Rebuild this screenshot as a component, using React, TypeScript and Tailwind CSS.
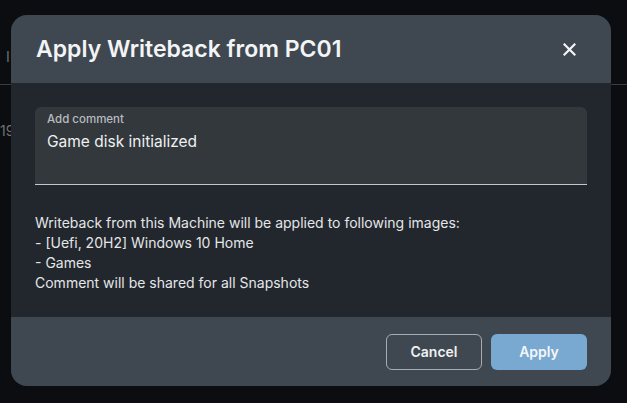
import React from "react";

export default function App() {
  return (
    <div
      className="relative w-[627px] h-[403px] overflow-hidden bg-[#0b0d10]"
      style={{ fontFamily: "Inter, 'Noto Sans', sans-serif" }}
    >
      {/* faint background page */}
      <div className="absolute left-[6px] top-[46px] text-[14px] text-[#6b7074]">I</div>
      <div className="absolute left-0 top-[84px] w-full h-px bg-[#3a3d40]" />
      <div className="absolute left-0 top-[120px] text-[14px] text-[#6b7074]">19</div>

      {/* dialog */}
      <div className="absolute left-[11px] top-[15px] w-[600px] h-[371px] rounded-[16px] overflow-hidden flex flex-col bg-[#22262d]">
        <div className="h-[68px] bg-[#3f4850] flex items-center justify-between pl-[25px] pr-[35px]">
          <h1 className="text-[23px] font-semibold text-[#f3f4f5] tracking-[0px]">
            Apply Writeback from PC01
          </h1>
          <svg width="13" height="13" viewBox="0 0 13 13" className="mt-px">
            <path d="M1.5 1.5 L11.5 11.5 M11.5 1.5 L1.5 11.5" stroke="#f3f4f5" strokeWidth="2.2" strokeLinecap="square" />
          </svg>
        </div>
        <div className="flex-1 px-[24px] pt-[24px]">
          <div className="h-[78px] bg-[#32383c] rounded-t-[6px] border-b border-[#c4c6c8] px-[12px] pt-[5px]">
            <div className="text-[11.5px] font-medium text-[#b8bcc0] leading-[14px]">Add comment</div>
            <div className="text-[15.5px] text-[#eef0f1] leading-[20px] mt-[6px]">Game disk initialized</div>
          </div>
          <div className="mt-[28px] text-[14px] leading-[20px] text-[#e4e6e8]">
            <div>Writeback from this Machine will be applied to following images:</div>
            <div>- [Uefi, 20H2] Windows 10 Home</div>
            <div>- Games</div>
            <div>Comment will be shared for all Snapshots</div>
          </div>
        </div>
        <div className="h-[69px] bg-[#3f4850] flex items-center justify-end gap-[9px] pr-[24px]">
          <button className="w-[96px] h-[36px] rounded-[6px] border border-[#a8acb0] text-[14px] font-semibold text-[#eef0f1]">
            Cancel
          </button>
          <button className="w-[96px] h-[36px] rounded-[6px] bg-[#79a8d0] text-[14px] font-semibold text-[#f4f7fa]">
            Apply
          </button>
        </div>
      </div>
    </div>
  );
}
